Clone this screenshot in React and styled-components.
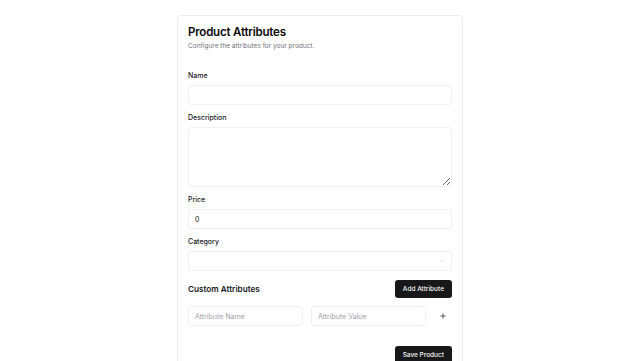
import React from "react";
import styled, { createGlobalStyle } from "styled-components";

const GlobalStyle = createGlobalStyle`
  * { box-sizing: border-box; }
  body {
    margin: 0;
    background: #ffffff;
    font-family: Inter, "Noto Sans", sans-serif;
    color: #09090b;
  }
`;

const Page = styled.main`
  display: flex;
  justify-content: center;
  padding-top: 15px;
`;

const Card = styled.section`
  width: 286px;
  background: #fff;
  border: 1px solid #ececee;
  border-radius: 4px;
  box-shadow: 0 1px 1px rgba(0, 0, 0, 0.03);
`;

const Header = styled.header`
  display: flex;
  flex-direction: column;
  gap: 2px;
  padding: 10px 10px 0;
`;

const Title = styled.h1`
  margin: 0;
  font-size: 11.5px;
  line-height: 13px;
  font-weight: 600;
  letter-spacing: -0.2px;
`;

const Subtitle = styled.p`
  margin: 0;
  font-size: 6.5px;
  line-height: 10px;
  color: #71717a;
`;

const Form = styled.form`
  display: flex;
  flex-direction: column;
  gap: 8px;
  padding: 20px 10px 12px;
`;

const Field = styled.div`
  display: flex;
  flex-direction: column;
  gap: 4px;
`;

const Label = styled.label`
  font-size: 7px;
  line-height: 10px;
  font-weight: 500;
  color: #18181b;
`;

const inputBase = `
  width: 100%;
  border: 1px solid #efeff1;
  border-radius: 3px;
  background: #fff;
  font-family: Inter, "Noto Sans", sans-serif;
  font-size: 7px;
  color: #27272a;
  padding: 0 6px;
  outline: none;
  &::placeholder { color: #a1a1aa; }
`;

const Input = styled.input`
  ${inputBase}
  height: 20px;
  flex: ${(p) => (p.$grow ? 1 : "none")};
  min-width: 0;
`;

const TextArea = styled.textarea`
  ${inputBase}
  height: 60px;
  padding: 4px 6px;
  display: block;
`;

const SelectBox = styled.div`
  ${inputBase}
  height: 20px;
  display: flex;
  align-items: center;
  justify-content: flex-end;
  padding-right: 6px;
  color: #c4c4c8;
`;

const SectionHead = styled.div`
  display: flex;
  justify-content: space-between;
  align-items: center;
  margin-top: 1px;
`;

const SectionTitle = styled.h2`
  margin: 0;
  font-size: 8.2px;
  font-weight: 600;
  color: #18181b;
`;

const Button = styled.button`
  height: 18px;
  padding: 0 8px;
  border: none;
  border-radius: 3px;
  background: #18181b;
  color: #fafafa;
  font-family: Inter, "Noto Sans", sans-serif;
  font-size: 6.5px;
  font-weight: 500;
`;

const Row = styled.div`
  display: flex;
  align-items: center;
  gap: 8px;
`;

const IconButton = styled.button`
  width: 18px;
  height: 20px;
  flex: none;
  border: none;
  background: transparent;
  display: flex;
  align-items: center;
  justify-content: center;
  color: #18181b;
  padding: 0;
`;

const Footer = styled.div`
  display: flex;
  justify-content: flex-end;
  margin-top: 12px;
`;

export default function App() {
  return (
    <>
      <GlobalStyle />
      <Page>
        <Card>
          <Header>
            <Title>Product Attributes</Title>
            <Subtitle>Configure the attributes for your product.</Subtitle>
          </Header>
          <Form onSubmit={(e) => e.preventDefault()}>
            <Field>
              <Label>Name</Label>
              <Input />
            </Field>
            <Field>
              <Label>Description</Label>
              <TextArea />
            </Field>
            <Field>
              <Label>Price</Label>
              <Input defaultValue="0" />
            </Field>
            <Field>
              <Label>Category</Label>
              <SelectBox>
                <svg width="6" height="6" viewBox="0 0 24 24" fill="none" stroke="currentColor" strokeWidth="2" strokeLinecap="round" strokeLinejoin="round">
                  <path d="m6 9 6 6 6-6" />
                </svg>
              </SelectBox>
            </Field>
            <SectionHead>
              <SectionTitle>Custom Attributes</SectionTitle>
              <Button type="button">Add Attribute</Button>
            </SectionHead>
            <Row>
              <Input $grow placeholder="Attribute Name" />
              <Input $grow placeholder="Attribute Value" />
              <IconButton type="button">
                <svg width="8" height="8" viewBox="0 0 24 24" fill="none" stroke="currentColor" strokeWidth="2" strokeLinecap="round" strokeLinejoin="round">
                  <path d="M5 12h14" />
                  <path d="M12 5v14" />
                </svg>
              </IconButton>
            </Row>
            <Footer>
              <Button type="submit">Save Product</Button>
            </Footer>
          </Form>
        </Card>
      </Page>
    </>
  );
}
